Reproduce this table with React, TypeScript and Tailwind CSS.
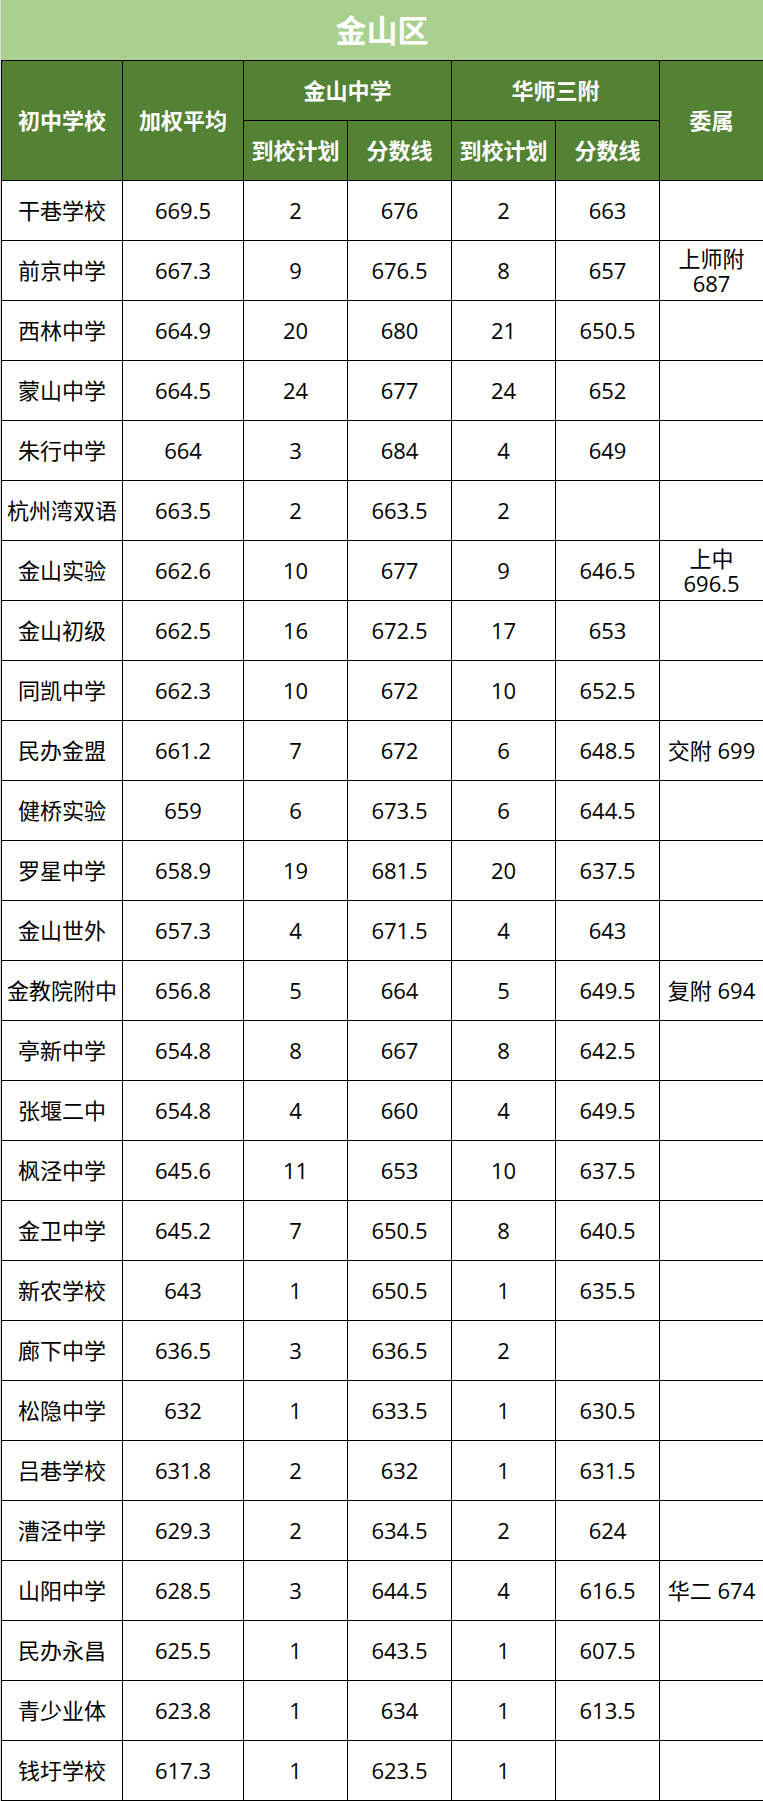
import * as React from 'react';

type Row = [string, string, string, string, string, string, string];

// 初中学校, 加权平均, 金山中学 到校计划 / 分数线, 华师三附 到校计划 / 分数线, 委属
const rows: Row[] = [
  ['干巷学校', '669.5', '2', '676', '2', '663', ''],
  ['前京中学', '667.3', '9', '676.5', '8', '657', '上师附\n687'],
  ['西林中学', '664.9', '20', '680', '21', '650.5', ''],
  ['蒙山中学', '664.5', '24', '677', '24', '652', ''],
  ['朱行中学', '664', '3', '684', '4', '649', ''],
  ['杭州湾双语', '663.5', '2', '663.5', '2', '', ''],
  ['金山实验', '662.6', '10', '677', '9', '646.5', '上中\n696.5'],
  ['金山初级', '662.5', '16', '672.5', '17', '653', ''],
  ['同凯中学', '662.3', '10', '672', '10', '652.5', ''],
  ['民办金盟', '661.2', '7', '672', '6', '648.5', '交附 699'],
  ['健桥实验', '659', '6', '673.5', '6', '644.5', ''],
  ['罗星中学', '658.9', '19', '681.5', '20', '637.5', ''],
  ['金山世外', '657.3', '4', '671.5', '4', '643', ''],
  ['金教院附中', '656.8', '5', '664', '5', '649.5', '复附 694'],
  ['亭新中学', '654.8', '8', '667', '8', '642.5', ''],
  ['张堰二中', '654.8', '4', '660', '4', '649.5', ''],
  ['枫泾中学', '645.6', '11', '653', '10', '637.5', ''],
  ['金卫中学', '645.2', '7', '650.5', '8', '640.5', ''],
  ['新农学校', '643', '1', '650.5', '1', '635.5', ''],
  ['廊下中学', '636.5', '3', '636.5', '2', '', ''],
  ['松隐中学', '632', '1', '633.5', '1', '630.5', ''],
  ['吕巷学校', '631.8', '2', '632', '1', '631.5', ''],
  ['漕泾中学', '629.3', '2', '634.5', '2', '624', ''],
  ['山阳中学', '628.5', '3', '644.5', '4', '616.5', '华二 674'],
  ['民办永昌', '625.5', '1', '643.5', '1', '607.5', ''],
  ['青少业体', '623.8', '1', '634', '1', '613.5', ''],
  ['钱圩学校', '617.3', '1', '623.5', '1', '', ''],
];

const font = { fontFamily: '"Open Sans", "Noto Sans CJK SC", sans-serif' };

export default function App() {
  return (
    <div className="w-[763px] bg-white border-l border-[#d9d9d9]" style={font}>
      <div className="flex h-[60px] items-center justify-center bg-[#a9d08e] text-[31px] font-bold text-white">
        金山区
      </div>
      <table className="w-[762px] table-fixed border-collapse text-[22px] text-black">
        <colgroup>
          <col className="w-[121px]" />
          <col className="w-[121px]" />
          <col className="w-[104px]" />
          <col className="w-[104px]" />
          <col className="w-[104px]" />
          <col className="w-[104px]" />
          <col className="w-[104px]" />
        </colgroup>
        <thead className="bg-[#548235] font-bold text-white">
          <tr className="h-[60px]">
            <th rowSpan={2} className="border border-black p-0 font-bold">初中学校</th>
            <th rowSpan={2} className="border border-black p-0 font-bold">加权平均</th>
            <th colSpan={2} className="border border-black p-0 font-bold">金山中学</th>
            <th colSpan={2} className="border border-black p-0 font-bold">华师三附</th>
            <th rowSpan={2} className="border border-black p-0 font-bold">委属</th>
          </tr>
          <tr className="h-[60px]">
            <th className="border border-black p-0 font-bold">到校计划</th>
            <th className="border border-black p-0 font-bold">分数线</th>
            <th className="border border-black p-0 font-bold">到校计划</th>
            <th className="border border-black p-0 font-bold">分数线</th>
          </tr>
        </thead>
        <tbody>
          {rows.map((row) => (
            <tr key={row[0]} className="h-[60px]">
              {row.map((cell, i) => (
                <td
                  key={i}
                  className="whitespace-pre-line border border-black p-0 text-center align-middle leading-[25px]"
                >
                  {cell}
                </td>
              ))}
            </tr>
          ))}
        </tbody>
      </table>
    </div>
  );
}
